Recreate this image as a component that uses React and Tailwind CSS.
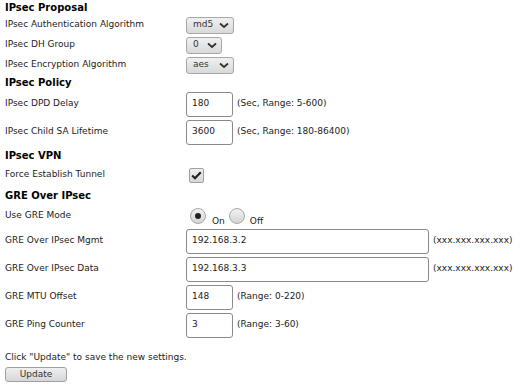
import React from "react";

const font = { fontFamily: '"DejaVu Sans", Verdana, sans-serif' };

function Heading({ children, h }) {
  return (
    <div className={`flex items-center ${h} pl-[5px] text-[10px] font-bold text-black`}>
      {children}
    </div>
  );
}

function Row({ label, h, children }) {
  return (
    <div className={`flex items-center ${h}`}>
      <div className="w-[186px] shrink-0 pl-[5px] text-[9px] text-[#222]">{label}</div>
      <div className="flex items-center">{children}</div>
    </div>
  );
}

function Chevron() {
  return (
    <svg width="10" height="7" viewBox="0 0 10 7" className="shrink-0">
      <path d="M1 1.5 L5 5 L9 1.5" fill="none" stroke="#333" strokeWidth="1.8" />
    </svg>
  );
}

function Select({ value, w }) {
  return (
    <div
      className={`flex h-[17px] ${w} items-center justify-between rounded-[3px] border border-[#a8a8a8] bg-gradient-to-b from-[#f0f0f0] to-[#d9d9d9] pl-[6px] pr-[4px] text-[9px] text-[#333]`}
    >
      <span>{value}</span>
      <Chevron />
    </div>
  );
}

function Input({ value, w }) {
  return (
    <div
      className={`flex h-[25px] ${w} items-center rounded-[3px] border border-[#8a8a8a] bg-white pl-[5px] text-[9px] text-[#222]`}
    >
      {value}
    </div>
  );
}

function Hint({ children }) {
  return <span className="ml-[4px] text-[9px] text-[#222]">{children}</span>;
}

function Radio({ checked }) {
  return (
    <div className="flex h-[16px] w-[16px] items-center justify-center rounded-full border border-[#a8a8a8] bg-gradient-to-b from-[#f2f2f2] to-[#d4d4d4]">
      {checked && <div className="h-[6px] w-[6px] rounded-full bg-[#222]" />}
    </div>
  );
}

export default function App() {
  return (
    <div className="w-[530px] h-[385px] bg-white overflow-hidden" style={font}>
      <Heading h="h-[15px]">IPsec Proposal</Heading>
      <Row label="IPsec Authentication Algorithm" h="h-[20px]">
        <Select value="md5" w="w-[48px]" />
      </Row>
      <Row label="IPsec DH Group" h="h-[20px]">
        <Select value="0" w="w-[36px]" />
      </Row>
      <Row label="IPsec Encryption Algorithm" h="h-[20px]">
        <Select value="aes" w="w-[48px]" />
      </Row>
      <Heading h="h-[15px]">IPsec Policy</Heading>
      <Row label="IPsec DPD Delay" h="h-[28px]">
        <Input value="180" w="w-[47px]" />
        <Hint>(Sec, Range: 5-600)</Hint>
      </Row>
      <Row label="IPsec Child SA Lifetime" h="h-[28px]">
        <Input value="3600" w="w-[47px]" />
        <Hint>(Sec, Range: 180-86400)</Hint>
      </Row>
      <Heading h="h-[18px]">IPsec VPN</Heading>
      <Row label="Force Establish Tunnel" h="h-[22px]">
        <div className="ml-[3px] flex h-[15px] w-[15px] items-center justify-center rounded-[2px] border border-[#a0a0a0] bg-gradient-to-b from-[#f0f0f0] to-[#d6d6d6]">
          <svg width="11" height="9" viewBox="0 0 11 9">
            <path d="M1.2 4.5 L4 7.2 L9.8 1.2" fill="none" stroke="#222" strokeWidth="2.2" />
          </svg>
        </div>
      </Row>
      <Heading h="h-[19px]">GRE Over IPsec</Heading>
      <Row label="Use GRE Mode" h="h-[22px]">
        <div className="ml-[4px] flex items-end">
          <Radio checked />
          <span className="ml-[6px] text-[9px] leading-none text-[#222] translate-y-[2px]">On</span>
          <div className="ml-[4px]">
            <Radio />
          </div>
          <span className="ml-[5px] text-[9px] leading-none text-[#222] translate-y-[2px]">Off</span>
        </div>
      </Row>
      <Row label="GRE Over IPsec Mgmt" h="h-[28px]">
        <Input value="192.168.3.2" w="w-[243px]" />
        <Hint>(xxx.xxx.xxx.xxx)</Hint>
      </Row>
      <Row label="GRE Over IPsec Data" h="h-[28px]">
        <Input value="192.168.3.3" w="w-[243px]" />
        <Hint>(xxx.xxx.xxx.xxx)</Hint>
      </Row>
      <Row label="GRE MTU Offset" h="h-[28px]">
        <Input value="148" w="w-[47px]" />
        <Hint>(Range: 0-220)</Hint>
      </Row>
      <Row label="GRE Ping Counter" h="h-[28px]">
        <Input value="3" w="w-[47px]" />
        <Hint>(Range: 3-60)</Hint>
      </Row>
      <div className="mt-[13px] pl-[5px] text-[9px] text-[#222] leading-[11px]">
        Click "Update" to save the new settings.
      </div>
      <div className="pl-[5px] pt-[4px]">
        <div className="flex h-[15px] w-[62px] items-center justify-center rounded-[3px] border border-[#a0a0a0] bg-gradient-to-b from-[#f0f0f0] to-[#d6d6d6] text-[9px] text-[#333]">
          Update
        </div>
      </div>
    </div>
  );
}
